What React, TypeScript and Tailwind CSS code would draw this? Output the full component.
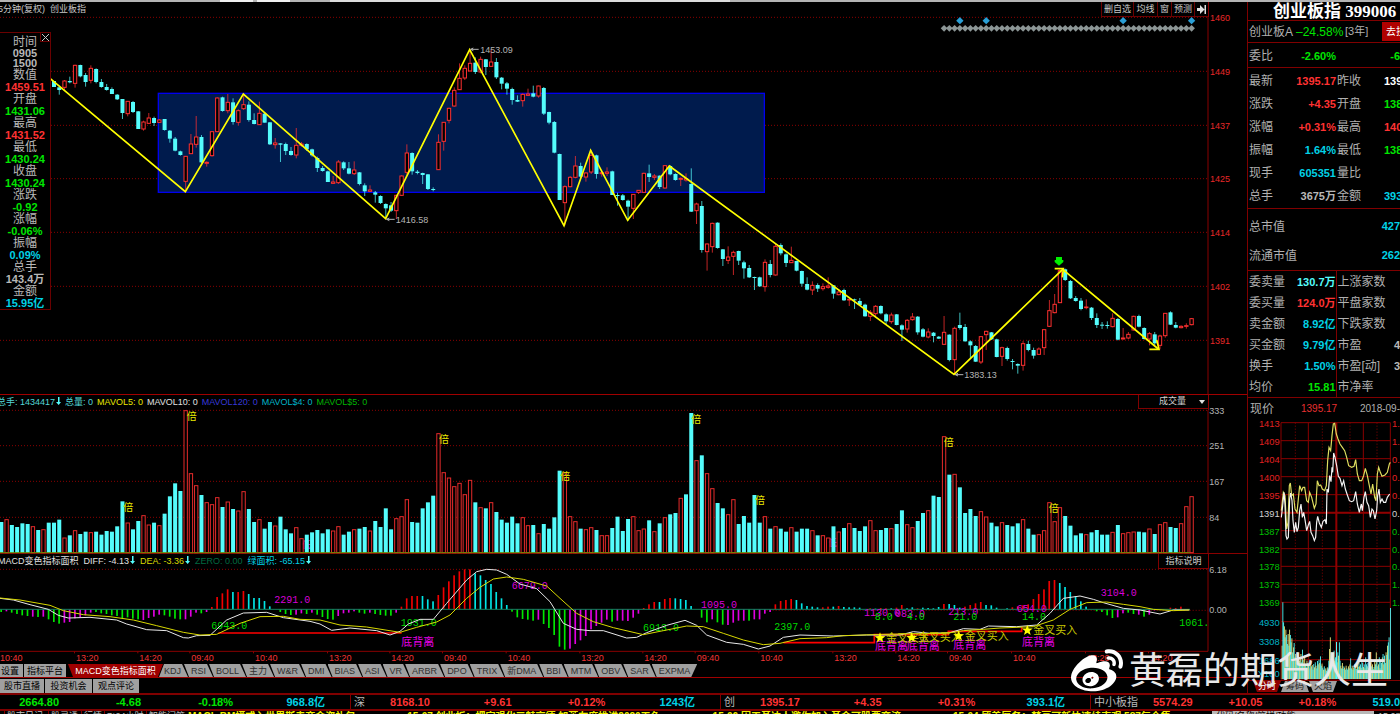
import React from "react";
import { FaWeibo } from "react-icons/fa";

/* All plots use a unit of one third of a pixel. */
const STEP = 15.8;
const X0 = 4;
const barX = (i: number) => X0 + i * STEP;
const DOWN = "#54fcfc";
const UP = "#ff3030";
const GRID = "#8a0000";

/* high, body top, body bottom, low, r = rising / c = falling; first candle is bar 10 */
const CANDLES = `243 243 261 261 c|258 262 270 284 c|240 243 262 272 r|230 243 247 250 c|194 196 250 263 r|194 195 229 232 c|219 225 246 260 c|196 205 241 250 r|205 207 246 250 c|237 246 261 263 c
252 261 270 272 c|262 267 282 282 c|282 284 298 300 c|297 297 339 357 c|303 304 341 349 r|303 306 336 339 c|333 334 387 387 c|362 366 387 392 r|339 354 370 372 r|350 354 369 378 c
357 360 367 369 r|357 357 390 392 c|390 392 416 428 c|411 416 452 454 c|452 454 465 467 c|468 469 544 575 r|402 432 461 462 r|348 411 433 443 r|405 411 487 490 c|484 487 490 500 r
394 395 467 470 r|292 294 395 396 r|290 292 333 335 c|282 307 332 340 r|295 307 366 374 c|328 332 367 377 r|286 314 326 330 r|304 314 360 365 c|340 360 372 373 c|305 340 374 375 r
337 341 368 368 c|366 367 433 435 c|414 429 434 446 r|430 430 434 486 c|428 432 453 465 c|441 453 465 467 c|384 436 465 475 r|426 432 436 440 r|430 432 448 453 c|446 448 466 470 c
470 474 504 516 c|498 504 513 515 c|512 514 546 546 c|528 546 550 552 r|480 486 548 552 r|484 487 505 510 c|486 505 521 523 c|484 510 521 525 r|516 517 552 556 c|550 556 574 588 c
556 570 574 576 r|573 577 584 608 c|586 588 609 612 c|610 612 625 657 c|606 616 632 636 c|584 586 632 657 r|526 528 586 587 r|433 459 517 524 r|457 459 514 524 c|510 515 519 523 c
518 519 525 552 c|522 523 567 570 c|562 567 570 574 c|403 427 509 510 r|366 367 424 452 r|323 325 361 370 r|262 271 318 320 r|190 235 269 270 r|196 205 234 240 r|149 190 213 214 r
172 188 216 222 c|170 178 216 220 r|177 178 201 225 c|148 186 199 200 r|174 186 232 237 c|231 233 251 268 c|246 250 266 284 c|263 267 300 314 c|286 300 305 306 c|280 283 302 320 r
266 282 286 288 r|257 280 290 292 c|257 258 288 293 r|261 264 341 345 c|335 336 368 373 c|363 366 458 460 c|461 462 600 600 c|556 560 608 677 r|528 532 560 562 r|468 498 532 535 r
488 498 530 535 c|516 519 531 545 r|450 466 516 522 r|464 466 522 536 c|512 518 521 530 r|502 516 520 528 r|512 514 585 585 c|578 585 588 617 c|582 586 600 602 c|599 602 620 662 c
582 583 625 657 r|570 571 577 582 r|518 520 577 578 r|494 520 531 546 c|522 528 532 540 r|526 527 561 567 c|495 497 564 566 r|496 498 523 526 c|520 522 540 542 c|532 535 538 558 r
520 536 540 545 r|505 552 635 636 c|608 612 632 672 r|603 618 750 758 c|730 732 755 812 r|668 670 740 758 r|667 668 744 746 c|747 748 777 798 c|739 771 781 792 r|752 757 769 825 r
752 753 782 795 c|782 787 805 836 c|795 804 832 834 c|830 831 834 870 c|830 832 859 861 c|778 787 860 875 r|780 792 825 832 c|732 739 825 827 r|730 735 760 766 c|760 763 789 801 c
740 781 788 789 r|782 783 812 814 c|812 813 851 860 c|832 852 869 871 c|844 856 870 885 r|850 855 866 876 c|850 860 866 872 r|832 858 862 866 r|855 856 881 896 c|868 876 884 886 r
866 870 901 903 c|896 898 900 918 r|896 898 900 927 c|894 903 915 918 c|911 914 949 950 c|930 937 949 963 r|915 919 941 952 r|916 918 940 943 c|940 943 964 973 c|938 945 965 971 r
942 943 975 976 c|973 976 989 1023 c|957 961 987 998 r|939 951 959 962 r|948 950 997 1004 c|984 988 1010 1012 c|985 996 1011 1015 r|996 998 1008 1027 c|1008 1010 1016 1017 c|948 997 1033 1035 r
1003 1004 1080 1084 c|980 985 1079 1124 r|938 975 984 989 c|972 981 1024 1025 c|1021 1024 1036 1074 c|1035 1038 1085 1086 c|1008 1010 1086 1092 r|992 994 1004 1050 r|996 997 1018 1020 c|1016 1018 1071 1072 c
1040 1043 1069 1098 r|1040 1044 1077 1082 c|1077 1083 1086 1108 c|1090 1092 1097 1121 c|1023 1031 1096 1112 r|1022 1032 1050 1054 c|1043 1050 1067 1076 c|1042 1047 1063 1065 r|988 989 1043 1065 r|900 932 979 981 r
882 913 938 940 r|806 812 908 908 r|806 808 840 843 c|840 843 895 897 c|888 894 903 905 c|894 902 927 931 c|898 921 923 928 r|921 923 954 960 c|940 954 975 984 c|966 974 977 987 c
964 975 978 986 c|940 955 980 982 r|954 957 1019 1021 c|984 1014 1017 1018 r|996 1003 1014 1018 r|947 949 990 992 r|944 948 980 982 c|982 984 1017 1019 c|996 1001 1017 1036 r|996 1003 1030 1036 c
1004 1008 1036 1048 r|939 940 1007 1013 r|934 937 974 975 c|966 975 983 985 c|976 979 983 985 r|970 977 979 986 r|954 956 974 976 r`
  .split(/[|\n]/)
  .map((s) => {
    const p = s.trim().split(" ");
    return { hi: +p[0], top: +p[1], bot: +p[2], lo: +p[3], up: p[4] === "r" };
  });

const VOLUME = `396c 388r 405c 411c 400c 402c 409r 420c 418r 398c 398c 389c 443r 436c 421r 432c 425c 427r 425c 434c 423c 425c 409c 334c 398r 418c 393c 376r 404r 398c 406r 371c 319c 280c 303c 61r 250r 286r 315c 337r 343r 322r 351c 335r 357c 362r 304r 357c 396c 388r 416c 396c 407r 380c 418c 430c 412r 445r 434c 427c 420c 430c 418c 422r 409r 434c 425c 418r 416c 411c 422r 393c 411c 355c 418c 385r 379r 328r 396c 398c 355c 337c 317c 130r 247r 263r 289r 279r 313r 270r 337c 352r 355c 337r 366c 389c 398c 380c 400c 382r 406r 405c 430r 402c 416c 382c 242c 247r 379r 394r 416c 418r 412r 420c 436r 436r 414c 380c 423c 387c 379r 421r 416r 391c 424r 400c 382r 373c 369c 324r 313c 69c 211r 196c 250r 295r 339c 355c 373r 328r 402c 378c 398c 315c 398c 379r 416c 409r 416c 425c 412r 425c 416c 416c 421r 436c 436r 443r 409c 425r 414c 400r 414c 423c 409c 391r 421r 420c 414c 415r 402c 361c 403r 412r 393c 369c 361r 317c 321c 139r 254c 252r 292c 369c 357c 378c 364r 380r 398c 409c 397r 405c 409c 400c 388r 416c 434c 433r 421r 337r 394r 352r 378c 407c 436c 430c 433r 427c 420c 434c 434c 426r 405c 430r 427r 425r 425c 427c 416r 432c 403r 397r 411c 414c 400r 349r 319r`
  .split(" ")
  .map((s) => ({ y: parseInt(s, 10), up: s.endsWith("r") }));

/* r, c rise above the zero line; g, m hang below it */
const HIST = `8g 6m 10g 14g 18g 20g 22m 23g 22m 30g 38g 43g 40m 38m 27m 24m 18m 10m 8g 12g 14g 18g 20g 26g 24g 28g 30g 32m 26m 22m 16m 18g 22g 28g 30g 30m 22m 10m 12g 8m 7r 37r 48r 60r 52c 52r 55r 46c 34c 34c 25c 9c 0c 8g 14g 17g 16m 12m 14g 10m 16g 23g 29g 31g 20m 12m 10m 6m 10g 13g 10m 14g 17g 19g 19g 10m 8r 33r 40r 40r 40c 30c 24c 43r 66r 84r 102r 114r 120r 120r 108c 102c 88c 76c 52c 33c 13c 7g 24g 29g 31g 34g 31m 44g 56g 77g 112g 121g 118m 104m 93m 80m 60m 50m 40m 31m 37g 34m 34m 35m 25m 13m 4r 15r 22r 22c 31r 34r 33c 31c 28c 10c 0c 25g 39g 30m 39g 46g 47m 40m 34m 34m 34g 30m 30m 13m 8m 15r 25r 28r 31r 28c 18c 10c 8c 6c 6r 8r 8c 10r 7c 6c 6c 5c 0c 3r 2c 4r 3r 3c 5r 13r 3c 6c 3r 5c 4c 3c 7c 16r 16c 13c 5c 8r 13r 18r 22r 13c 12c 5c 0c 3c 6r 9r 12r 15r 31r 46r 60r 85r 88r 79c 67c 52c 39c 24c 8c 0c 6g 8g 18g 26g 24m 12m 10g 14g 16m 22g 16m 3m 0c 0c 5r 4r 8r`
  .split(" ")
  .map((s) => ({ v: parseInt(s, 10), k: s.slice(-1) }));
const HIST_COLOR: Record<string, string> = { r: "#f00000", c: "#00e5e5", g: "#00e800", m: "#e000e0" };

const DIFF =
  "0,625 40,630 90,644 145,658 175,676 205,684 270,682 350,690 380,702 440,719 500,722 550,743 565,744 590,737 630,736 680,690 730,669 800,667 850,683 930,694 960,702 995,721 1050,714 1130,722 1170,735 1200,724 1225,702 1260,688 1300,688 1340,640 1400,570 1430,545 1460,538 1490,540 1520,553 1560,582 1610,596 1650,635 1690,700 1730,718 1770,722 1810,722 1880,744 1910,742 1940,728 2000,706 2055,691 2090,706 2120,735 2180,757 2230,763 2275,777 2310,768 2350,742 2400,735 2500,738 2600,735 2700,735 2740,725 2790,730 2850,728 2890,716 2940,718 2965,708 3050,710 3110,705 3150,670 3190,625 3240,618 3280,628 3310,638 3370,655 3420,660 3480,672 3520,660 3568,660";
const DEA =
  "0,624 60,630 150,646 190,662 250,674 330,680 400,690 470,707 550,727 600,735 650,733 720,700 780,680 850,679 900,688 960,690 1020,705 1100,711 1200,727 1250,712 1310,696 1350,675 1400,625 1440,592 1480,567 1520,561 1570,568 1640,588 1680,625 1730,670 1780,695 1840,713 1930,734 1990,722 2060,708 2110,710 2170,730 2230,750 2290,764 2340,760 2400,746 2480,743 2530,737 2650,733 2750,731 2840,730 2890,722 2950,718 3000,714 3100,710 3160,690 3210,658 3260,638 3320,636 3370,643 3420,650 3460,658 3520,662 3568,660";

const MACD_NOTES: [number, number, string, string][] = [
  [823, 640, "2291.0", "m"], [634, 717, "6943.0", "g"], [1202, 708, "1931.0", "g"], [1535, 598, "6679.0", "m"],
  [1929, 723, "6913.0", "g"], [2103, 653, "1095.0", "m"], [2323, 721, "2397.0", "g"], [2592, 677, "1130.0", "m"],
  [2685, 681, "083.0", "m"], [2624, 689, "8.0", "g"], [2720, 689, "4.0", "g"], [2845, 676, "213.0", "m"],
  [2860, 689, "21.0", "g"], [3050, 665, "654.0", "m"], [3066, 689, "14.0", "g"], [3302, 619, "3104.0", "m"],
  [3538, 708, "1061.", "g"],
];
const DIVERGENCE: [number, number][] = [[1204, 769], [2625, 779], [2720, 779], [2860, 776], [3066, 768]];
const CROSSES: [number, number][] = [[2640, 744], [2735, 743], [2876, 738], [3082, 721]];
const DOUBLES: [number, number][] = [[370, 363], [560, 90], [1317, 159], [1681, 271], [2074, 98], [2265, 343], [2831, 168], [3146, 365]];
const TIMES: [number, string][] = [
  [0, "10:40"], [228, "13:20"], [418, "14:20"], [574, "09:40"], [765, "10:40"], [987, "13:20"], [1174, "14:20"],
  [1332, "09:40"], [1523, "10:40"], [1744, "13:20"], [1933, "14:20"], [2090, "09:40"], [2281, "10:40"],
  [2503, "13:20"], [2692, "14:20"], [2847, "09:40"], [3039, "10:40"], [3261, "13:20"], [3450, "14:20"],
];

const star = (cx: number, cy: number, r: number) =>
  Array.from({ length: 10 }, (_, k) => {
    const a = -Math.PI / 2 + (k * Math.PI) / 5;
    const q = k % 2 ? r * 0.42 : r;
    return `${(cx + q * Math.cos(a)).toFixed(1)},${(cy + q * Math.sin(a)).toFixed(1)}`;
  }).join(" ");
const diamond = (x: number, y: number, r: number) => `${x - r},${y} ${x},${y - r} ${x + r},${y} ${x},${y + r}`;

function Gridline({ y, from = 0 }: { y: number; from?: number }) {
  return <line x1={from} x2={3624} y1={y} y2={y} stroke={GRID} strokeWidth={3} strokeDasharray="3 6" />;
}

function Falling() {
  return (
    <svg className="ml-px inline-block h-[8px] w-[5px] align-baseline" viewBox="0 0 5 8" fill="#54fcfc" aria-label="下降">
      <path d="M2 0h1.500v5H5L2.700 8L0 5h2z" />
    </svg>
  );
}

function PriceChart() {
  const labels: [number, string][] = [[52, "1460"], [214, "1449"], [376, "1437"], [536, "1425"], [697, "1414"], [859, "1402"], [1021, "1391"]];
  return (
    <svg className="h-[377px] w-full overflow-visible" viewBox="0 51 3741 1131" preserveAspectRatio="none" aria-label="K线图">
      {labels.map(([y, t]) => (
        <g key={t}>
          <Gridline y={y} />
          <text x={3630} y={y + 10} fill="#e82828" fontSize={27}>{t}</text>
        </g>
      ))}
      <line x1={3624} x2={3624} y1={51} y2={1182} stroke={GRID} strokeWidth={3} />
      <rect x={475} y={280} width={1818} height={297} fill="#001b4d" stroke="#0000ee" strokeWidth={4} />
      {CANDLES.map((c, k) => {
        const x = barX(k + 10);
        const color = c.up ? UP : DOWN;
        return (
          <g key={k}>
            <line x1={x} x2={x} y1={c.hi} y2={c.lo} stroke={color} strokeWidth={3} opacity={0.75} />
            {c.up ? (
              <rect x={x - 5} y={c.top} width={10} height={Math.max(c.bot - c.top, 2)} fill="#000" stroke={color} strokeWidth={3} />
            ) : (
              <rect x={x - 6} y={c.top} width={12} height={Math.max(c.bot - c.top, 3)} fill={color} />
            )}
          </g>
        );
      })}
      {Array.from({ length: 48 }, (_, k) => (
        <polygon key={k} points={diamond(barX(179 + k), 85, 10)} fill="#8c9696" />
      ))}
      {[182, 187, 213, 226].map((i) => (
        <polygon key={i} points={diamond(barX(i), 62, 11)} fill="#2a9fd6" />
      ))}
      <g fill="none" stroke="#ffff00" strokeWidth={5}>
        <polyline points="150,235 556,575 730,282 1157,656 1409,149 1692,677 1772,451 1883,661 2008,498 2862,1123 3188,808 3475,1047" />
        <polyline points="3164,806 3190,806 3187,832" />
        <polyline points="3448,1048 3477,1048 3470,1020" />
      </g>
      <path d="M3168 771h18v9h4v6l-13 11l-13-11v-6h4z" fill="#00f000" />
      <g stroke="#b4b4b4" strokeWidth={3} fill="none">
        <path d="M1412 148h24M1420 144l-8 4l8 4M1160 658h24M1168 654l-8 4l8 4M2866 1124h24M2874 1120l-8 4l8 4" />
      </g>
      <g fill="#b4b4b4" fontSize={27}>
        <text x={1441} y={158}>1453.09</text>
        <text x={1187} y={668}>1416.58</text>
        <text x={2893} y={1134}>1383.13</text>
      </g>
    </svg>
  );
}

function VolumeChart() {
  const labels: [number, string][] = [[61, "333"], [167, "251"], [274, "167"], [382, "84"]];
  return (
    <svg className="h-[143px] w-full overflow-visible" viewBox="0 60 3741 429" preserveAspectRatio="none" aria-label="成交量图">
      {labels.map(([y, t]) => (
        <g key={t}>
          <Gridline y={y} />
          <text x={3628} y={y + 10} fill="#b4b4b4" fontSize={27}>{t}</text>
        </g>
      ))}
      <line x1={3624} x2={3624} y1={60} y2={489} stroke={GRID} strokeWidth={3} />
      <g fill="#d000d0" fontSize={27}>
        <text x={905} y={475}>低</text>
        <text x={2484} y={467}>低</text>
      </g>
      {VOLUME.map((b, i) =>
        b.up ? (
          <rect key={i} x={barX(i) - 5} y={b.y + 1} width={10} height={487 - b.y} fill="#000" stroke={UP} strokeWidth={3} opacity={0.9} />
        ) : (
          <rect key={i} x={barX(i) - 6} y={b.y} width={12} height={489 - b.y} fill={DOWN} />
        )
      )}
      <g fill="#e8e800" fontSize={30}>
        {DOUBLES.map(([x, y]) => (
          <text key={x} x={x} y={y}>倍</text>
        ))}
      </g>
      <line x1={0} x2={3570} y1={488} y2={488} stroke="#6a8a00" strokeWidth={3} />
    </svg>
  );
}

function MacdChart() {
  return (
    <svg className="h-[95px] w-full overflow-visible" viewBox="0 537 3741 285" preserveAspectRatio="none" aria-label="MACD图">
      <Gridline y={538} />
      <Gridline y={661} from={2300} />
      <text x={3628} y={548} fill="#b4b4b4" fontSize={27}>6.18</text>
      <text x={3628} y={670} fill="#b4b4b4" fontSize={27}>0.00</text>
      <path d="M3624 537V784H0" stroke={GRID} strokeWidth={3} fill="none" />
      {HIST.map((h, i) => {
        const above = h.k === "r" || h.k === "c";
        return <rect key={i} x={barX(i) - 3} y={above ? 658 - h.v : 658} width={5} height={h.v} fill={HIST_COLOR[h.k]} />;
      })}
      <line x1={0} x2={3570} y1={658} y2={658} stroke="#158060" strokeWidth={3} />
      <path d="M655 729H1205M2350 758H2623V734H2845V724H3065V712" fill="none" stroke="#ff0000" strokeWidth={5} />
      <g className="font-['Liberation_Mono',monospace]" fontSize={30}>
        {MACD_NOTES.map(([x, y, t, k]) => (
          <text key={x} x={x} y={y} fill={k === "m" ? "#d800d8" : "#00d800"}>{t}</text>
        ))}
      </g>
      <polyline points={DIFF} fill="none" stroke="#e8e8e8" strokeWidth={3} />
      <polyline points={DEA} fill="none" stroke="#d8d800" strokeWidth={3} />
      <g fill="#e800e8" fontSize={33}>
        {DIVERGENCE.map(([x, y]) => (
          <text key={x} x={x} y={y}>底背离</text>
        ))}
      </g>
      {CROSSES.map(([x, y]) => (
        <g key={x}>
          <polygon points={star(x, y, 17)} fill="#ffff00" />
          <text x={x + 18} y={y + 11} fill="#c8c800" fontSize={33}>金叉买入</text>
        </g>
      ))}
      <g fill="#f03434" fontSize={27}>
        {TIMES.map(([x, t]) => (
          <g key={x}>
            <rect x={x - 6} y={784} width={3} height={6} fill={GRID} />
            <text x={x} y={812}>{t}</text>
          </g>
        ))}
      </g>
    </svg>
  );
}

const MINI_VOL = [
  770, 640, 700, 712, 745, 722, 738, 765, 735, 770, 722, 738, 760, 748, 790, 775, 762, 805, 795, 812, 790, 800, 828, 815, 808,
  795, 820, 782, 812, 830, 800, 826, 835, 815, 822, 830, 818, 838, 820, 832, 828, 842, 825, 835, 820, 830, 838, 816, 826, 812,
  822, 802, 830, 824, 836, 842, 832, 842, 838, 845, 835, 838, 815, 780, 745, 790, 815, 822, 790, 785, 815, 805, 812, 820, 790,
  800, 760, 815, 830, 838, 822, 840, 832, 836, 842, 830, 838, 842, 832, 838, 826, 808, 838, 830, 842, 835, 826, 838, 830, 840,
  826, 834, 818, 832, 826, 836, 812, 822, 834, 826, 838, 805, 826, 832, 822, 838, 828, 822, 810, 832, 826, 840, 834, 812, 826,
  790, 818, 832, 826, 805, 838, 818, 822, 805, 795, 826, 800, 822, 790, 798, 770, 760, 745, 812, 657,
];
const MINI_DIFF =
  "244,385 248,350 252,310 255,345 258,440 261,450 265,445 269,330 272,312 276,335 279,395 283,430 287,400 291,428 295,415 299,365 303,345 307,385 311,370 315,392 320,425 325,408 329,397 333,430 338,440 343,455 347,445 350,400 353,382 358,402 364,415 369,397 375,392 379,405 381,300 385,310 389,260 393,278 396,235 398,250 401,192 405,205 410,230 415,262 420,268 426,290 431,275 436,300 442,318 448,335 455,338 461,335 467,308 472,345 478,370 484,345 487,365 492,325 496,308 501,340 506,350 511,385 516,360 520,365 525,390 530,365 533,320 537,300 541,340 546,330 551,340 557,340 562,325 569,315";
const MINI_AVG =
  "244,365 250,310 255,320 260,420 264,400 268,290 271,282 275,320 280,315 285,360 291,370 295,330 299,290 305,305 309,295 314,295 320,335 325,340 329,310 335,325 343,358 348,345 352,275 357,290 362,288 367,300 374,305 379,290 383,215 387,175 392,185 396,140 400,105 404,103 409,135 414,150 420,165 427,175 434,185 440,205 446,230 455,235 462,232 467,212 472,255 478,275 485,275 491,260 496,238 502,260 508,290 513,315 518,285 524,325 528,335 532,255 536,235 541,250 546,262 555,258 562,250 568,225 571,220";

function MiniChart() {
  const rows: [number, string, string, string][] = [
    [101, "1413", "1.", "#e02020"], [155, "1409", "1.", "#e02020"], [209, "1404", "0.", "#e02020"], [263, "1400", "0.", "#e02020"],
    [317, "1395", "0.", "#e02020"], [371, "1391", "0.", "#d0d0d0"], [425, "1387", "0.", "#00c000"], [479, "1382", "0.", "#00c000"],
    [532, "1378", "0.", "#00c000"], [586, "1373", "1.", "#00c000"], [640, "1369", "1.", "#00c000"],
    [698, "4930", "", "#00b4c8"], [755, "3308", "", "#00b4c8"], [812, "1686", "", "#00b4c8"],
  ];
  return (
    <svg className="h-[261px] w-full" viewBox="144 90 456 783" preserveAspectRatio="none" aria-label="分时图">
      <g stroke={GRID} strokeWidth={3} fill="none">
        {rows.map(([y]) => (
          <line key={y} x1={243} x2={571} y1={y} y2={y} />
        ))}
        <path d="M243 101V870H571V101M325 101V870M490 101V870" />
        <path d="M286 101V870M367 101V870M450 101V870M531 101V870" strokeDasharray="3 6" />
      </g>
      <path d="M243 371H571M409 101V870" stroke="#900000" strokeWidth={6} fill="none" />
      {MINI_VOL.map((y, k) => (
        <rect key={k} x={245 + k * 2.26} y={y} width={2.6} height={870 - y} fill={(k * 7) % 5 < 2 || k === 64 ? "#f0f080" : DOWN} />
      ))}
      <rect x={408} y={759} width={3} height={111} fill={DOWN} />
      <polyline points={MINI_AVG} fill="none" stroke="#e0e060" strokeWidth={3.5} />
      <polyline points={MINI_DIFF} fill="none" stroke="#f4f4f4" strokeWidth={3.5} />
      {rows.map(([y, l, r, c]) => (
        <g key={y} fill={c} fontSize={28}>
          <text x={239} y={y + 12} textAnchor="end">{l}</text>
          <text x={576} y={y + 12}>{r}</text>
        </g>
      ))}
      <text x={239} y={864} textAnchor="end" fill="#00b4c8" fontSize={28}>X100</text>
    </svg>
  );
}

const RED = "text-[#ff3232]";
const GREEN = "text-[#00e600]";
const CYAN = "text-[#00d2e6]";
const GRAY = "text-[#b8b8b8]";

const PANEL: [string, string, string][] = [
  ["数值", "1459.51", RED], ["开盘", "1431.06", GREEN], ["最高", "1431.52", RED], ["最低", "1430.24", GREEN],
  ["收盘", "1430.24", GREEN], ["涨跌", "-0.92", GREEN], ["涨幅", "-0.06%", GREEN], ["振幅", "0.09%", CYAN],
  ["总手", "143.4万", GRAY], ["金额", "15.95亿", CYAN],
];

function CursorPanel() {
  return (
    <aside className="absolute left-0 top-8 w-[51px] border border-l-0 border-[#6a0000] bg-black pt-[3px] text-center text-xs leading-[12px] text-[#b8b8b8]">
      <button aria-label="关闭" className="absolute right-0 top-0 flex h-[9px] w-[10px] items-center justify-center border-b border-l border-[#6a0000]">
        <svg className="size-[7px]" viewBox="0 0 7 7" stroke="#c8c8c8" strokeWidth="1"><path d="M0 0L7 7M7 0L0 7" /></svg>
      </button>
      <dl>
        <dt>时间</dt>
        <dd className="pb-px text-[11px] leading-[10px] font-bold">0905<br />1500</dd>
        {PANEL.map(([k, v, c]) => (
          <React.Fragment key={k}>
            <dt>{k}</dt>
            <dd className={`text-[11px] font-bold whitespace-nowrap ${c}`}>{v}</dd>
          </React.Fragment>
        ))}
      </dl>
    </aside>
  );
}

type Row = [string, string, string, string, string, string];
const QUOTES: Row[] = [
  ["最新", "1395.17", RED, "昨收", "139", "text-white"],
  ["涨跌", "+4.35", RED, "开盘", "138", GREEN],
  ["涨幅", "+0.31%", RED, "最高", "140", RED],
  ["振幅", "1.64%", CYAN, "最低", "138", GREEN],
  ["现手", "605351", CYAN, "量比", "", GRAY],
  ["总手", "3675万", GRAY, "金额", "393", CYAN],
];
const BREADTH: Row[] = [
  ["委卖量", "130.7万", "text-[#54fcfc]", "上涨家数", "", GRAY],
  ["委买量", "124.0万", RED, "平盘家数", "", GRAY],
  ["卖金额", "8.92亿", CYAN, "下跌家数", "", GRAY],
  ["买金额", "9.79亿", CYAN, "市盈", "4", GRAY],
  ["换手", "1.50%", CYAN, "市盈[动]", "3", GRAY],
  ["均价", "15.81", GREEN, "市净率", "", GRAY],
];

function QuoteTable({ rows, tall }: { rows: Row[]; tall?: boolean }) {
  return (
    <table className="w-full table-fixed border-collapse text-xs leading-none text-[#b0b0b0]">
      <colgroup>
        <col className="w-[42px]" />
        <col className="w-[46px]" />
        <col className="w-[48px]" />
        <col />
      </colgroup>
      <tbody>
        {rows.map((r) => (
          <tr key={r[0]} className={tall ? "h-[23px]" : "h-[21px]"}>
            <th scope="row" className="p-0 pt-px pl-px text-left font-normal whitespace-nowrap">{r[0]}</th>
            <td className={`p-0 pt-px text-right text-[11px] font-bold whitespace-nowrap ${r[2]}`}>
              <span className="flex justify-end">{r[1]}</span>
            </td>
            <th scope="row" className={`p-0 pt-px pl-px text-left font-normal whitespace-nowrap ${tall ? "" : "border-l border-[#800000]"}`}>{r[3]}</th>
            <td className={`p-0 pt-px text-right text-[11px] font-bold ${r[5]}`}>{r[4]}</td>
          </tr>
        ))}
      </tbody>
    </table>
  );
}

function Sidebar() {
  return (
    <aside className="flex w-[153px] shrink-0 flex-col overflow-hidden border-l border-[#800000] whitespace-nowrap text-[#b0b0b0]">
      <h1 className="h-[18px] pl-[25px] font-['Liberation_Serif','Noto_Sans_CJK_SC',serif] text-[17px] leading-[20px] font-bold text-white">
        创业板指 399006
      </h1>
      <div className="flex h-[23px] items-center border-y border-[#800000] text-xs">
        <span className="w-[48px] pl-px">创业板A</span>
        <span className={`w-[49px] ${GREEN}`}>–24.58%</span>
        <span className="flex-1 text-[11px]">[3年]</span>
        <button className="h-[19px] w-[18px] overflow-hidden bg-[#b00000] pl-1 text-left text-[10px] text-white">去挂</button>
      </div>
      <div className="flex h-[25px] items-center border-b border-[#800000] pt-[2px] pl-px text-xs">
        <span className="w-[42px]">委比</span>
        <span className={`w-[45px] text-right text-[11px] font-bold ${GREEN}`}>-2.60%</span>
        <span className={`flex-1 text-right text-[11px] font-bold ${GREEN}`}>-6</span>
      </div>
      <div className="h-[141px] border-b border-[#800000] pt-px">
        <QuoteTable rows={QUOTES} tall />
      </div>
      <dl className="grid h-[62px] grid-cols-[auto_1fr] grid-rows-2 items-center border-b border-[#800000] pt-[3px] pl-px text-xs">
        <dt>总市值</dt>
        <dd className={`text-right text-[11px] font-bold ${CYAN}`}>427</dd>
        <dt>流通市值</dt>
        <dd className={`text-right text-[11px] font-bold ${CYAN}`}>262</dd>
      </dl>
      <div className="border-b border-[#800000]">
        <QuoteTable rows={BREADTH} />
      </div>
      <div className="flex h-[21px] items-center pl-[2px] text-xs">
        <span className="w-[51px]">现价</span>
        <span className="w-[59px] text-[10px] text-[#e83030]">1395.17</span>
        <span className="text-[10px]">2018-09-</span>
      </div>
      <MiniChart />
      <div className="flex h-[12px] border-t border-[#800000] pl-[5px] text-[9px] leading-[11px] text-[#202020]">
        <button className="w-[28px] bg-[#900000] text-white [clip-path:polygon(0_0,100%_0,calc(100%-4px)_100%,4px_100%)]">分时</button>
        <button className="w-[28px] bg-[#a0a0a0] [clip-path:polygon(4px_0,calc(100%-4px)_0,100%_100%,0_100%)]">筹码</button>
        <button className="w-[28px] bg-[#a0a0a0] [clip-path:polygon(0_0,100%_0,calc(100%-4px)_100%,4px_100%)]">火焰</button>
      </div>
    </aside>
  );
}

const TABS = ["RSI", "BOLL", "主力", "W&R", "DMI", "BIAS", "ASI", "VR", "ARBR", "DPO", "TRIX", "新DMA", "BBI", "MTM", "OBV", "SAR"];

function IndicatorTabs() {
  return (
    <nav className="flex h-[14px] border-b border-[#a00000] text-[9px] leading-[12px] whitespace-nowrap text-[#303030]">
      <button className="w-[23px] bg-[#a0a0a0] pr-1 text-right text-black">设置</button>
      <button className="ml-px w-[42px] bg-[#a0a0a0] text-black">指标平台</button>
      <button className="ml-[2px] w-[95px] bg-[#a00000] text-white [clip-path:polygon(0_0,100%_0,calc(100%-5px)_100%,5px_100%)]">MACD变色指标面积</button>
      <button className="-ml-[4px] bg-[#a0a0a0] pr-[7px] pl-[5px] [clip-path:polygon(5px_0,calc(100%-6px)_0,100%_100%,0_100%)]">KDJ</button>
      {TABS.map((t) => (
        <button key={t} className="-ml-[4px] bg-[#a0a0a0] px-[7px] [clip-path:polygon(0_0,calc(100%-6px)_0,100%_100%,5px_100%)]">{t}</button>
      ))}
      <button className="-ml-[4px] bg-[#a0a0a0] px-[7px] [clip-path:polygon(0_0,100%_0,calc(100%-6px)_100%,5px_100%)]">EXPMA</button>
    </nav>
  );
}

function QuoteBar() {
  const val = "text-right text-[11px] font-bold";
  const cols = "grid grid-cols-[79fr_82fr_94fr_90fr_25fr]";
  return (
    <footer className="grid h-[16px] grid-cols-[350fr_370fr_370fr_310fr] overflow-hidden border-t-2 border-[#800000] text-xs leading-[15px] whitespace-nowrap text-[#b0b0b0]">
      <div className={`grid grid-cols-[59fr_82fr_92fr_92fr_25fr] ${val} ${GREEN}`}>
        <span>2664.80</span><span>-4.68</span><span>-0.18%</span><span className={CYAN}>968.8亿</span>
      </div>
      <div className={`${cols} border-l border-[#800000] ${RED}`}>
        <span className="flex justify-between pl-[3px] text-[11px] font-bold"><span className={`font-normal ${GRAY}`}>深</span>8168.10</span>
        <span className={val}>+9.61</span><span className={val}>+0.12%</span><span className={`${val} ${CYAN}`}>1243亿</span>
      </div>
      <div className={`${cols} border-l border-[#800000] ${RED}`}>
        <span className="flex justify-between pl-[3px] text-[11px] font-bold"><span className={`font-normal ${GRAY}`}>创</span>1395.17</span>
        <span className={val}>+4.35</span><span className={val}>+0.31%</span><span className={`${val} ${CYAN}`}>393.1亿</span>
      </div>
      <div className={`grid grid-cols-[102fr_70fr_74fr_64fr] overflow-hidden border-l border-[#800000] ${RED}`}>
        <span className="flex justify-between pl-[3px] text-[11px] font-bold"><span className={`font-normal ${GRAY}`}>中小板指</span>5574.29</span>
        <span className={val}>+10.05</span><span className={val}>+0.18%</span><span className={`${val} ${CYAN}`}>519.0</span>
      </div>
    </footer>
  );
}

function Ticker() {
  const link = "border-l border-[#800000] px-[2px]";
  return (
    <div className="flex h-[5px] overflow-hidden border-t-2 border-[#800000] pl-[4px] text-[9px] leading-[11px] whitespace-nowrap text-[#c0c0c0]">
      <a href="#diary" className={`w-[44px] ${link}`}>股市日记</a>
      <a href="#link" className={`w-[33px] ${link}`}>股灵通</a>
      <a href="#market" className={`w-[23px] ${link}`}>行情</a>
      <a href="#hours" className={`w-[42px] ${link}`}>7*24小时</a>
      <a href="#qa" className={`w-[42px] ${link}`}>智能问答</a>
      <p className="flex flex-1 gap-[52px] overflow-hidden text-[10px] font-bold text-[#f0f000]">
        <span>MACL.BM模式入世界斯夫商金咨礼包</span>
        <span>15:07 创业板：把家强化三魅京德 加蒂左度推进2020工免</span>
        <span>15:06 因工基达人邀你加入基金可股票交流</span>
        <span>15:04 感美厚务：梦高可新快速续克观 587每全集</span>
      </p>
      <span className="w-[162px] bg-[#b8b8b8] pl-1 text-black">代码/名称/简拼/功能</span>
      <span className="w-[26px] pl-1">15:08</span>
    </div>
  );
}

export default function App() {
  return (
    <main className="relative min-h-screen overflow-hidden bg-black font-['Liberation_Sans','Noto_Sans_CJK_SC',sans-serif]">
      <div className="flex h-[2px] bg-[#b4b4b4]">
        <div className="ml-[220px] w-[33px] bg-[#f0f0f0]" />
        <div className="ml-1 w-[33px] bg-[#f0f0f0]" />
        <div className="ml-[40px] w-[400px] bg-[#dcdcdc]" />
      </div>
      <div className="flex">
        <section className="min-w-0 flex-1">
          <header className="flex h-[15px] text-[9px] leading-[15px] whitespace-nowrap text-[#c8c8c8]">
            <h2 className="-ml-[2px] flex-1 whitespace-pre">5分钟(复权)  创业板指</h2>
            <div className="flex border-[#6a0000] text-[9px] [&>button]:border-b [&>button]:border-l [&>button]:border-[#6a0000]">
              <button className="w-[32px]">删自选</button>
              <button className="w-[24px]">均线</button>
              <button className="w-[14px]">窗</button>
              <button className="w-[23px]">预测</button>
              <button className="flex w-[14px] items-center justify-center" aria-label="展开">
                <svg className="size-[9px]" viewBox="0 0 9 9" fill="#e0e0e0"><path d="M0 3h3V0l4.500 4.500L3 9V6H0zM7.500 0H9v9H7.500z" /></svg>
              </button>
            </div>
            <div className="w-[39px] border-l border-[#8a0000]" />
          </header>
          <PriceChart />
          <header className="flex h-[16px] border-t border-[#a00000] text-[9px] leading-[15px] whitespace-nowrap">
            <div className="-ml-[3px] flex flex-1 gap-[4px] text-[#54d8d8]">
              <span>总手: 1434417<Falling /></span>
              <span>总量: 0</span>
              <span className="text-[#e8e800]">MAVOL5: 0</span>
              <span className="text-[#e0e0e0]">MAVOL10: 0</span>
              <span className="text-[#3838d8]">MAVOL120: 0</span>
              <span className="text-[#00b4c8]">MAVOL$4: 0</span>
              <span className="text-[#00b400]">MAVOL$5: 0</span>
            </div>
            <label className="relative h-[14px] w-[70px] border-b border-l border-[#800000]">
              <select aria-label="指标" className="block h-[13px] w-full appearance-none bg-transparent pl-[20px] text-[9px] leading-[13px] text-[#d0d0d0]">
                <option>成交量</option>
              </select>
              <svg className="pointer-events-none absolute top-[5px] right-[3px] h-[4px] w-[6px]" viewBox="0 0 6 4" fill="#e0e0e0"><path d="M0 0h6L3 4z" /></svg>
            </label>
            <div className="w-[39px] border-l border-[#8a0000]" />
          </header>
          <VolumeChart />
          <header className="flex h-[16px] border-t border-[#8a0000] text-[9px] leading-[15px] whitespace-nowrap">
            <div className="-ml-[2px] flex flex-1 gap-[5px] text-[#e0e0e0]">
              <span>MACD变色指标面积</span>
              <span>DIFF: -4.13<Falling /></span>
              <span className="text-[#d8d800]">DEA: -3.36<Falling /></span>
              <span className="text-[#006a40]">ZERO: 0.00</span>
              <span className="text-[#00d2e6]">绿面积: -65.15<Falling /></span>
            </div>
            <button className="h-[15px] w-[50px] border-b border-l border-[#800000] text-[9px] text-[#d0d0d0]">指标说明</button>
            <div className="w-[39px] border-l border-[#8a0000]" />
          </header>
          <MacdChart />
          <IndicatorTabs />
          <div className="flex h-[15px] gap-px pt-px text-[9px] leading-[13px] text-black">
            <button className="w-[44px] bg-[#a0a0a0] pr-1 text-right">股市直播</button>
            <button className="w-[47px] bg-[#a0a0a0]">投资机会</button>
            <button className="w-[46px] bg-[#a0a0a0]">观点评论</button>
          </div>
        </section>
        <Sidebar />
      </div>
      <QuoteBar />
      <Ticker />
      <CursorPanel />
      <div className="pointer-events-none absolute right-3 bottom-4 flex items-center gap-[6px] text-[37px] leading-[44px] whitespace-nowrap text-[#e8e8e8]">
        <FaWeibo className="size-[52px] text-white" aria-hidden />
        <span>黄磊的期货人生</span>
      </div>
    </main>
  );
}
